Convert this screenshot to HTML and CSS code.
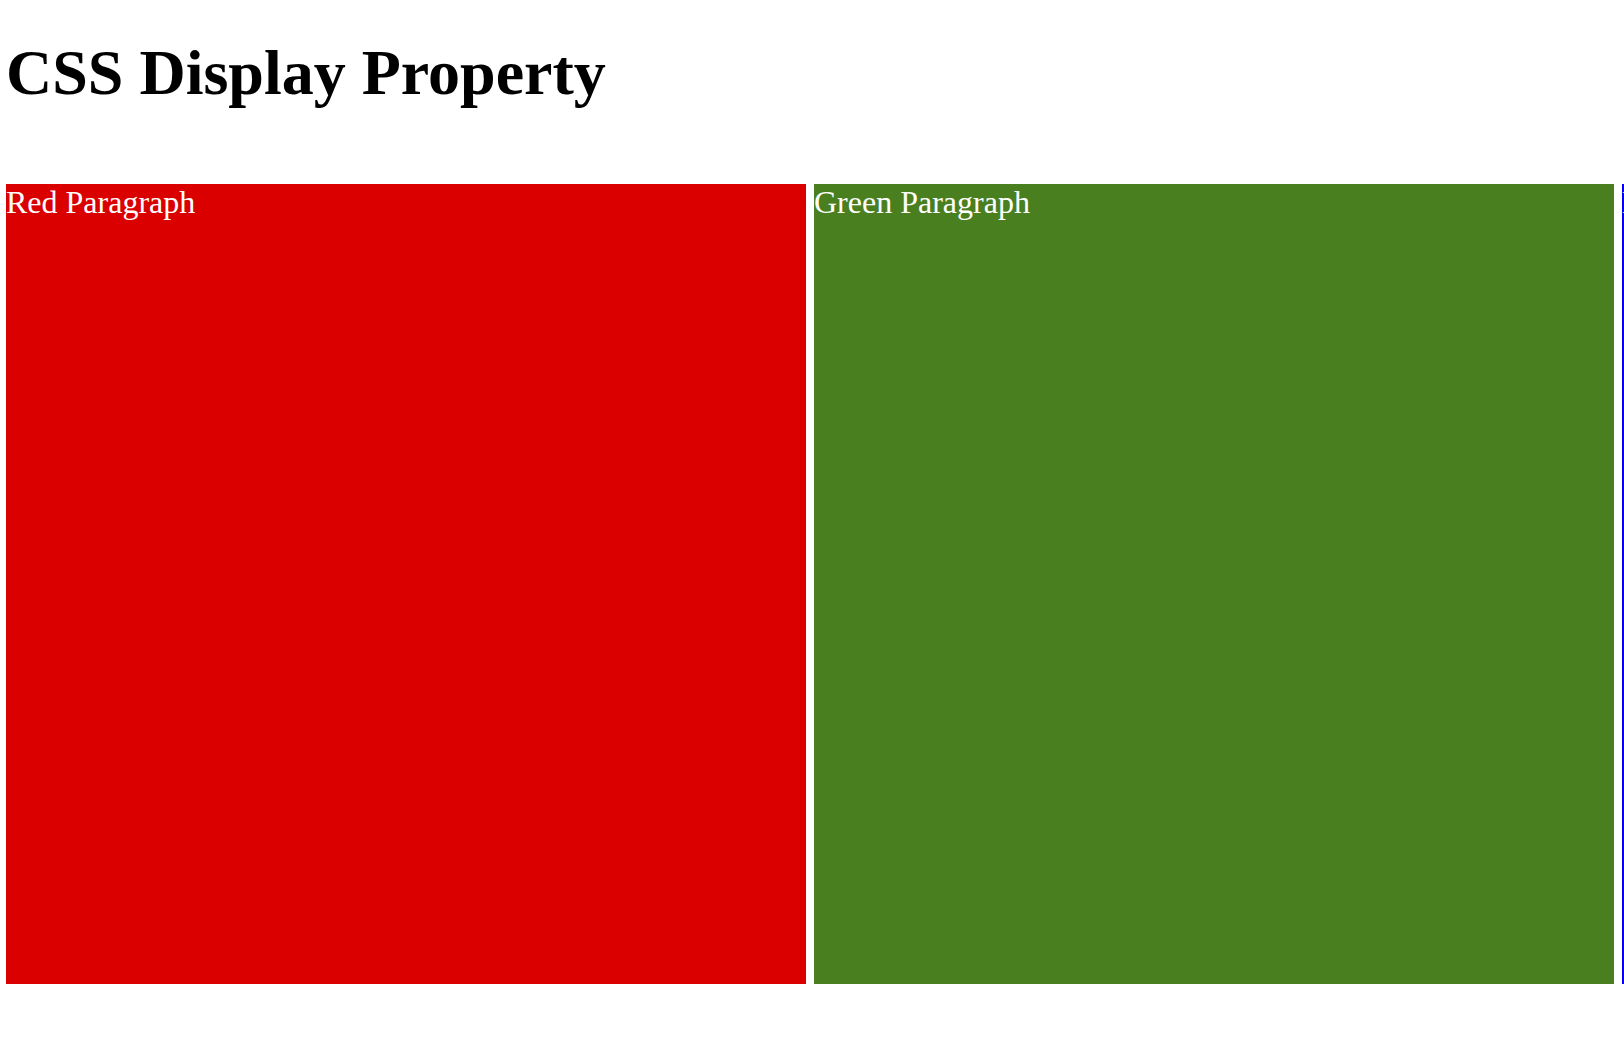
FILE: index.html
```html
<!DOCTYPE html>
<html>
<head>
<meta charset="utf-8">
<title>CSS Display Property</title>
<link rel="stylesheet" href="styles.css">
</head>
<body>
<h1 class="title">CSS Display Property</h1>
<div class="row">
  <p class="box red">Red Paragraph</p>
  <p class="box green">Green Paragraph</p>
  <p class="box blue">Blue Paragraph</p>
</div>
</body>
</html>
```
FILE: styles.css
```css
html, body {
  overflow-x: hidden;
}
body {
  margin: 0;
  padding: 36px 6px 0;
  font-family: "Liberation Serif", "Times New Roman", serif;
  background: #ffffff;
  color: #000000;
}
.title {
  margin: 0;
  font-size: 64px;
  line-height: 74px;
  font-weight: bold;
}
.row {
  display: flex;
  gap: 8px;
  margin-top: 74px;
}
.box {
  flex: 0 0 800px;
  width: 800px;
  height: 800px;
  margin: 0;
  font-size: 32px;
  line-height: 37px;
  color: #ffffff;
}
.red { background: #da0000; }
.green { background: #4a7f1f; }
.blue { background: #0000f5; }
```
